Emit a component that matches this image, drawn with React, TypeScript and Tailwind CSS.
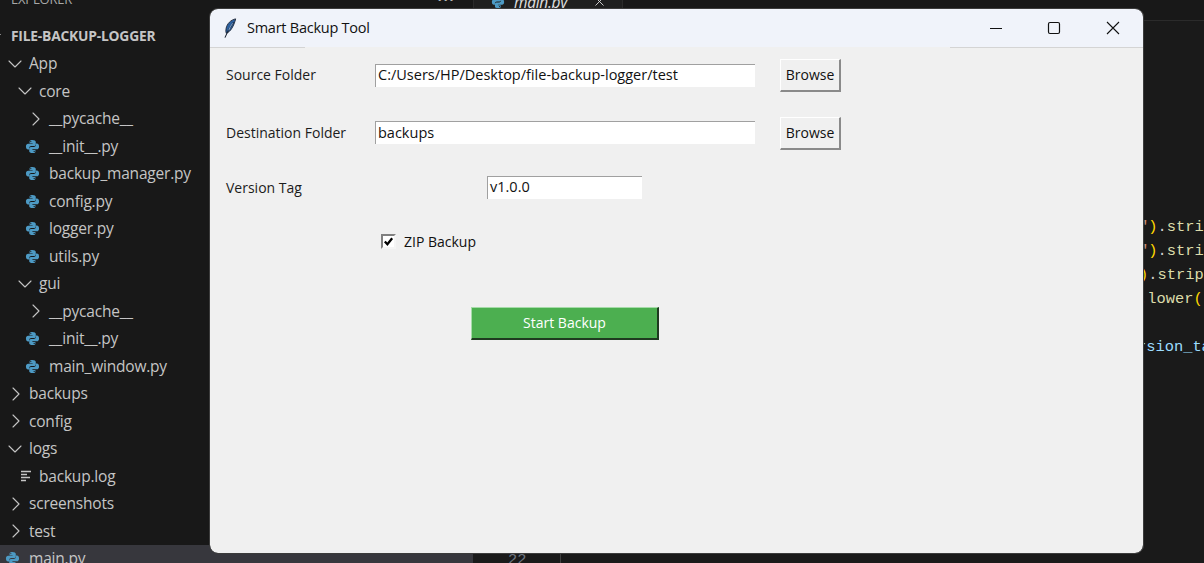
import { ChevronDown, ChevronRight, X } from "lucide-react";

interface TreeRow {
  name: string;
  kind: "open" | "closed" | "py" | "log";
  pad: string;
  selected?: boolean;
}

const rows: TreeRow[] = [
  { name: "App", kind: "open", pad: "pl-[2.5px]" },
  { name: "core", kind: "open", pad: "pl-[12.5px]" },
  { name: "__pycache__", kind: "closed", pad: "pl-[23.5px]" },
  { name: "__init__.py", kind: "py", pad: "pl-[25px]" },
  { name: "backup_manager.py", kind: "py", pad: "pl-[25px]" },
  { name: "config.py", kind: "py", pad: "pl-[25px]" },
  { name: "logger.py", kind: "py", pad: "pl-[25px]" },
  { name: "utils.py", kind: "py", pad: "pl-[25px]" },
  { name: "gui", kind: "open", pad: "pl-[12.5px]" },
  { name: "__pycache__", kind: "closed", pad: "pl-[23.5px]" },
  { name: "__init__.py", kind: "py", pad: "pl-[25px]" },
  { name: "main_window.py", kind: "py", pad: "pl-[25px]" },
  { name: "backups", kind: "closed", pad: "pl-[3.5px]" },
  { name: "config", kind: "closed", pad: "pl-[3.5px]" },
  { name: "logs", kind: "open", pad: "pl-[2.5px]" },
  { name: "backup.log", kind: "log", pad: "pl-[20px]" },
  { name: "screenshots", kind: "closed", pad: "pl-[3.5px]" },
  { name: "test", kind: "closed", pad: "pl-[3.5px]" },
  { name: "main.py", kind: "py", pad: "pl-[5px]", selected: true },
];

function PythonIcon({ className }: { className?: string }) {
  return (
    <svg viewBox="0 0 16 16" className={className} fill="#4d9ac4">
      <path d="M7.9 1C5 1 4.9 2.2 4.9 3v1.4h3.2v.6H3.3C2 5 1 6 1 8s1 3.1 2.3 3.1h1.2V9.6c0-1.2 1-2.1 2.1-2.1h3.2c.9 0 1.7-.8 1.7-1.7V3c0-1.100-1.300-2-3.600-2zM6.200 2.100a.65.65 0 1 1 0 1.300.65.65 0 0 1 0-1.300z" />
      <path d="M8.100 15c2.900 0 3-1.200 3-2v-1.400H7.900V11h4.800c1.300 0 2.300-1 2.300-3s-1-3.100-2.300-3.100h-1.200v1.500c0 1.200-1 2.100-2.100 2.100H6.200c-.9 0-1.700.8-1.700 1.700V13c0 1.100 1.300 2 3.600 2zm1.700-1.100a.65.65 0 1 1 0-1.300.65.65 0 0 1 0 1.300z" />
    </svg>
  );
}

function LogIcon() {
  return (
    <svg viewBox="0 0 12 12" className="w-3 h-3 shrink-0" stroke="#c5c5c5" strokeWidth="1.300">
      <path d="M1 1.500h10M1 4.500h6M1 7.500h9M1 10.500h5" />
    </svg>
  );
}

function FeatherIcon() {
  return (
    <svg viewBox="0 0 16 24" className="w-[14px] h-[21px]">
      <path d="M14.500 1C9 2 4.500 6.500 3.500 12c-.4 2.200-.3 4 .2 5.500C8.500 16 12.500 9 14.500 1z" fill="#2b5f9e" stroke="#1c2433" strokeWidth="1" />
      <path d="M12 5C8.500 9.500 5 15 2.200 22.500" fill="none" stroke="#1c2433" strokeWidth="1.200" />
      <path d="M11 6c-2 3-3.500 5-4.500 8" fill="none" stroke="#8fb6e0" strokeWidth="1" />
    </svg>
  );
}

function Row({ row }: { row: TreeRow }) {
  const isPy = row.kind === "py";
  return (
    <div
      className={`flex items-center h-[27.5px] shrink-0 ${row.pad} ${
        row.selected ? "bg-[#37373d]" : ""
      }`}
    >
      {row.kind === "open" && <ChevronDown className="w-6 h-6 mr-[2.5px] shrink-0" strokeWidth={1.1} />}
      {row.kind === "closed" && <ChevronRight className="w-6 h-6 mr-[1.5px] shrink-0" strokeWidth={1.1} />}
      {isPy && <PythonIcon className="w-[15px] h-[15px] mr-[9px] shrink-0" />}
      {row.kind === "log" && <span className="mr-[7px] flex"><LogIcon /></span>}
      <span className="whitespace-nowrap">{row.name}</span>
    </div>
  );
}

function Sidebar() {
  return (
    <aside className="w-[473px] shrink-0 h-full bg-[#181818] text-[#c5c5c5] text-[15.5px] flex flex-col font-['Open_Sans',sans-serif] tracking-[-0.2px]">
      <div className="flex items-center justify-between -mt-[9px] h-[18px] pl-[11px] pr-[18px] text-[13px] text-[#a8a8a8] shrink-0">
        <span>EXPLORER</span>
        <span className="tracking-[1px] text-[#c5c5c5]">•••</span>
      </div>
      <div className="flex items-center h-[27.5px] mt-[13.5px] shrink-0 text-[13.8px] font-bold text-[#c5c5c5]">
        <ChevronDown className="w-[14px] h-[14px] -ml-[10px] mr-[7px]" strokeWidth={1.5} />
        <span className="whitespace-nowrap">FILE-BACKUP-LOGGER</span>
      </div>
      <div className="flex flex-col">
        {rows.map((row, i) => (
          <Row key={i} row={row} />
        ))}
      </div>
    </aside>
  );
}

function Editor() {
  return (
    <main className="flex-1 min-w-0 h-full bg-[#1f1f1f] flex flex-col overflow-hidden">
      <div className="h-[21px] shrink-0 bg-[#181818] border-b border-[#2b2b2b] flex">
        <div className="w-[150px] h-[21px] bg-[#1f1f1f] border-x border-[#2b2b2b] flex items-center pl-[17px] text-[#e0e0e0] overflow-hidden">
          <PythonIcon className="w-[14px] h-[14px] -mt-[18px] mr-[9px] shrink-0" />
          <span className="italic text-[15.5px] -mt-[16px] font-['Open_Sans',sans-serif] tracking-[-0.3px]">main.py</span>
          <X className="w-[15px] h-[15px] -mt-[18px] ml-[25px] shrink-0" strokeWidth={1.4} />
        </div>
      </div>
      <div className="flex-1 bg-[#1a1a1a] pt-[194px] relative font-['Liberation_Mono',monospace] text-[15.4px] leading-[24px] whitespace-pre">
        <div className="pl-[666px] text-[#dcdcaa]"><span className="text-[#ce9178]">"</span><span className="text-[#ffd700]">)</span><span className="text-[#cccccc]">.</span>strip<span className="text-[#ffd700]">()</span></div>
        <div className="pl-[666px] text-[#dcdcaa]"><span className="text-[#ce9178]">"</span><span className="text-[#ffd700]">)</span><span className="text-[#cccccc]">.</span>strip<span className="text-[#ffd700]">()</span></div>
        <div className="pl-[666px] text-[#dcdcaa]"><span className="text-[#ffd700]">)</span><span className="text-[#cccccc]">.</span>strip<span className="text-[#ffd700]">()</span></div>
        <div className="pl-[665px] text-[#dcdcaa]"><span className="text-[#cccccc]">.</span>lower<span className="text-[#ffd700]">()</span></div>
        <div className="h-[24px]" />
        <div className="pl-[645.5px] text-[#9cdcfe]">version_tag</div>
        <div className="absolute bottom-0 left-[35px] w-[20px] text-[#6e7681] -mb-[9px] leading-[24px]">22</div>
        <div className="absolute bottom-0 left-[87px] w-px h-[12px] bg-[#404040]" />
      </div>
    </main>
  );
}

function Entry({ value, width, pad = "pb-[2px]" }: { value: string; width: string; pad?: string }) {
  return (
    <div className={`${width} ${pad} h-[23px] bg-white border-t border-l border-[#a0a0a0] pl-[2px] flex items-center text-[14.5px] text-[#111] shrink-0 whitespace-nowrap overflow-hidden`}>
      {value}
    </div>
  );
}

function BrowseButton() {
  return (
    <button className="w-[61px] h-[33px] ml-[25px] pb-[1px] shrink-0 bg-[#f0f0f0] border border-white border-r-[#8a8a8a] border-b-[#8a8a8a] border-r-2 border-b-2 text-[14px] text-[#111]">
      Browse
    </button>
  );
}

function BackupWindow() {
  return (
    <section className="absolute left-[210px] top-[9px] w-[933px] h-[544px] rounded-lg overflow-hidden bg-[#f0f0f0] flex flex-col outline outline-[#3c3c3c] shadow-[1px_0_0_#3c3c3c] font-['Open_Sans',sans-serif]">
      <header className="h-[38px] shrink-0 bg-[#f0f3fa] flex items-center text-[#111]">
        <div className="ml-[13px] mr-[10px] flex"><FeatherIcon /></div>
        <span className="text-[14.5px] tracking-[-0.25px]">Smart Backup Tool</span>
        <div className="ml-auto flex items-center h-full">
          <svg viewBox="0 0 14 14" className="w-[14px] h-[14px]" stroke="#111" strokeWidth="1"><path d="M1 7.500h12" /></svg>
          <svg viewBox="0 0 14 14" className="w-[14px] h-[14px] ml-[44px]" fill="none" stroke="#111" strokeWidth="1.200"><rect x="1.500" y="1.500" width="11" height="11" rx="1.500" /></svg>
          <svg viewBox="0 0 14 14" className="w-[14px] h-[14px] ml-[45px] mr-[23px]" stroke="#111" strokeWidth="1.100"><path d="M1 1l12 12M13 1L1 13" /></svg>
        </div>
      </header>
      <div className="flex h-px shrink-0">
        <div className="w-[95px] bg-[#d4d4d4]" />
        <div className="flex-1 bg-[#f0f0f0]" />
        <div className="w-[193px] bg-[#d4d4d4]" />
      </div>
      <div className="flex flex-col pt-[11px] pl-[16px] text-[14px] text-[#111]">
        <div className="flex items-center">
          <span className="w-[149px] shrink-0 pb-[2px] text-[#1c1c1c]">Source Folder</span>
          <Entry value="C:/Users/HP/Desktop/file-backup-logger/test" width="w-[380px]" />
          <BrowseButton />
        </div>
        <div className="flex items-center mt-[25px]">
          <span className="w-[149px] shrink-0 pb-[2px] text-[#1c1c1c]">Destination Folder</span>
          <div className="-mt-[2px]">
            <Entry value="backups" width="w-[380px]" pad="pb-0" />
          </div>
          <BrowseButton />
        </div>
        <div className="flex items-center mt-[26px]">
          <span className="w-[261px] shrink-0 text-[#1c1c1c]">Version Tag</span>
          <Entry value="v1.0.0" width="w-[155px]" />
        </div>
        <div className="flex items-center mt-[32px] ml-[155px]">
          <div className="w-[15px] h-[15px] bg-white border-2 border-[#808080] border-r-[#f5f5f5] border-b-[#f5f5f5] flex items-center justify-center">
            <svg viewBox="0 0 12 12" className="w-[11px] h-[11px]" fill="none" stroke="#000" strokeWidth="2.500"><path d="M2 6l2.800 3L10 2.500" /></svg>
          </div>
          <span className="ml-[8px]">ZIP Backup</span>
        </div>
        <button className="mt-[55px] ml-[245px] pb-[2px] w-[188px] h-[33px] bg-[#4caf50] border border-[#a5dca8] border-r-2 border-b-2 border-r-[#1f3a20] border-b-[#1f3a20] text-white text-[14px]">
          Start Backup
        </button>
      </div>
    </section>
  );
}

export default function App() {
  return (
    <div className="relative w-[1204px] h-[563px] overflow-hidden flex bg-[#181818]">
      <Sidebar />
      <Editor />
      <BackupWindow />
    </div>
  );
}
